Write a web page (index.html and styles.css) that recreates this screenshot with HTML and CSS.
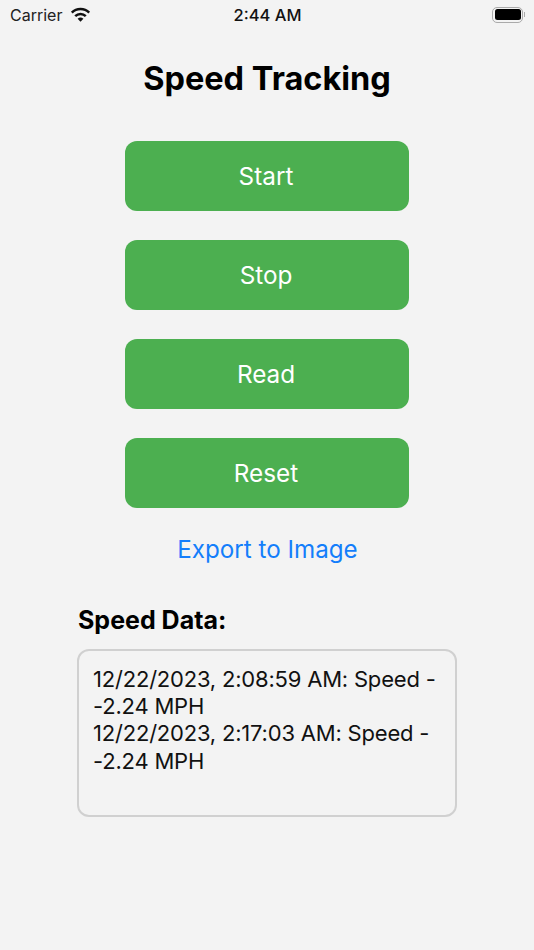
FILE: index.html
```html
<!DOCTYPE html>
<html lang="en">
<head>
    <meta charset="UTF-8">
    <meta name="viewport" content="width=device-width, initial-scale=1.0">
    <title>Speed Tracking</title>
    <link rel="stylesheet" href="styles.css">
</head>
<body>

    <div class="status-bar">
        <div class="status-left">
            <span class="carrier">Carrier</span>
            <svg class="wifi" width="21" height="16" viewBox="0 0 21 16">
                <path d="M1.800 5.600A12.500 12.500 0 0 1 19.200 5.600" fill="none" stroke="#111" stroke-width="2.500"/>
                <path d="M5.200 9.100A7.600 7.600 0 0 1 15.800 9.100" fill="none" stroke="#111" stroke-width="2.500"/>
                <path d="M10.500 14.800L7.600 11.800A4.200 4.200 0 0 1 13.400 11.800Z" fill="#111"/>
            </svg>
        </div>
        <span class="clock">2:44 AM</span>
        <div class="status-right">
            <span class="battery"><span class="battery-level"></span></span>
            <span class="battery-cap"></span>
        </div>
    </div>

    <div class="container">
        <h1 class="title">Speed Tracking</h1>

        <div class="buttons">
            <button class="action-btn">Start</button>
            <button class="action-btn">Stop</button>
            <button class="action-btn">Read</button>
            <button class="action-btn">Reset</button>
        </div>

        <a class="export-link" href="#">Export to Image</a>

        <div class="data-section">
            <h2 class="data-title">Speed Data:</h2>
            <div class="data-box">
                <p class="data-row">12/22/2023, 2:08:59 AM: Speed - -2.24 MPH</p>
                <p class="data-row">12/22/2023, 2:17:03 AM: Speed - -2.24 MPH</p>
            </div>
        </div>
    </div>

</body>
</html>
```

FILE: styles.css
```css
/* Page */
body {
    margin: 0;
    height: 950px;
    overflow: hidden;
    background-color: #f3f3f3;
    font-family: 'Inter', 'Liberation Sans', sans-serif;
    color: #000;
}

/* Status bar */
.status-bar {
    height: 29px;
    padding: 0 9px 0 10px;
    display: grid;
    grid-template-columns: 1fr auto 1fr;
    align-items: center;
    font-size: 16px;
    color: #222;
}

.status-left {
    display: flex;
    align-items: center;
    gap: 8px;
}

.clock {
    font-weight: 500;
    font-size: 16.500px;
    color: #111;
}

.status-right {
    display: flex;
    align-items: center;
    justify-content: flex-end;
    gap: 1px;
}

.battery {
    box-sizing: border-box;
    width: 31px;
    height: 16px;
    padding: 1.500px;
    border: 1.500px solid #aaa;
    border-radius: 5px;
    display: block;
}

.battery-level {
    display: block;
    height: 100%;
    background-color: #000;
    border-radius: 2.500px;
}

.battery-cap {
    width: 1px;
    height: 5px;
    background-color: #aaa;
}

/* Content */
.container {
    display: flex;
    flex-direction: column;
    align-items: center;
}

.title {
    margin: 30px 0 42px;
    font-size: 32.500px;
    line-height: 40px;
    font-weight: 700;
}

.buttons {
    display: flex;
    flex-direction: column;
    gap: 29px;
}

.action-btn {
    width: 284px;
    height: 70px;
    padding: 0 2px 0 0;
    border: none;
    border-radius: 12px;
    background-color: #4caf50;
    color: #fff;
    font-family: inherit;
    font-size: 24.300px;
}

.export-link {
    margin: 27px 0 0 1px;
    font-size: 24.200px;
    line-height: 30px;
    color: #147efb;
    text-decoration: none;
}

/* Speed data */
.data-section {
    width: 380px;
    margin-top: 40px;
}

.data-title {
    margin: 0 0 14px 1px;
    font-size: 25px;
    line-height: 30px;
    font-weight: 700;
}

.data-box {
    box-sizing: border-box;
    height: 168px;
    padding: 14.500px 14px;
    border: 2px solid #d0d0d0;
    border-radius: 12px;
    font-size: 22px;
    letter-spacing: -0.200px;
    line-height: 27.400px;
    color: #111;
}

.data-row {
    margin: 0;
}
```
